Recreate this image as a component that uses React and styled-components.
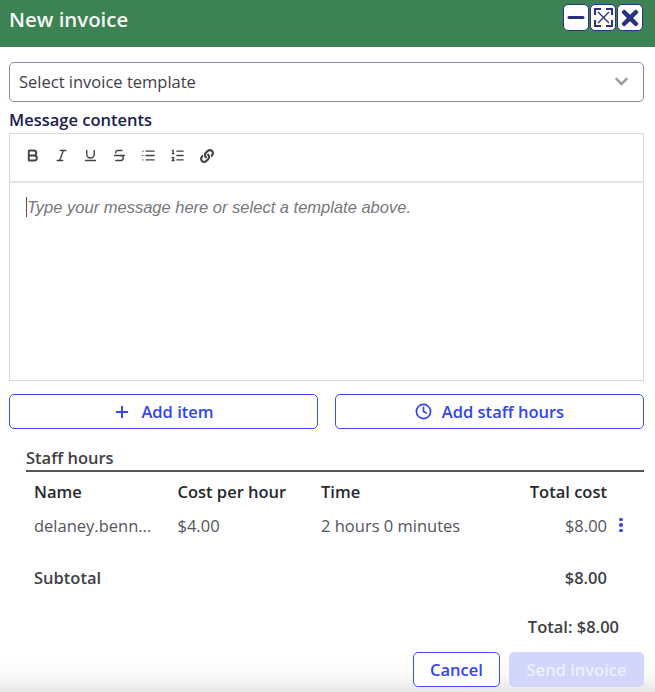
import React from 'react';
import styled, { createGlobalStyle } from 'styled-components';
import { FaLink, FaChevronDown, FaTimes } from 'react-icons/fa';
import { FiPlus, FiClock, FiMinus } from 'react-icons/fi';
import { Bold, Italic, Underline, Strikethrough, List, ListOrdered } from 'lucide-react';

const GlobalStyle = createGlobalStyle`
    html, body {
        margin: 0;
        padding: 0;
        background: #fff;
    }
    * {
        box-sizing: border-box;
    }
`;
const Dialog = styled.div`
    width: 655px;
    height: 692px;
    display: flex;
    flex-direction: column;
    overflow: hidden;
    background: #fff;
    font-family: "Open Sans", "Noto Sans", sans-serif;
    color: #3c3c48;
`;
const Header = styled.div`
    height: 47px;
    flex: none;
    display: flex;
    align-items: flex-start;
    justify-content: space-between;
    padding: 4px 12px 0 9px;
    background: #3c8253;
`;
const Title = styled.div`
    margin-top: 2px;
    font-size: 20.4px;
    line-height: 27px;
    font-weight: 600;
    color: #f4f8f5;
`;
const WindowButtons = styled.div`
    display: flex;
    gap: 1px;
`;
const WindowButton = styled.button`
    width: 26px;
    height: 27px;
    padding: 0;
    display: flex;
    align-items: center;
    justify-content: center;
    background: #fff;
    border: 1px solid #27337f;
    border-radius: 5px;
    color: #27337f;
`;
const Body = styled.div`
    flex: 1;
    display: flex;
    flex-direction: column;
    padding: 15px 11px 0 9px;
`;
const Select = styled.div`
    height: 40px;
    flex: none;
    display: flex;
    align-items: center;
    justify-content: space-between;
    padding: 0 14px 2px 9px;
    border: 1px solid #8a8aa8;
    border-radius: 5px;
    font-size: 16.5px;
    color: #3f3f47;
`;
const Label = styled.div`
    margin-top: 7px;
    font-size: 16.5px;
    line-height: 22px;
    font-weight: 600;
    color: #1b2150;
`;
const Editor = styled.div`
    height: 248px;
    margin-top: 2px;
    flex: none;
    border: 1px solid #d9d9d9;
`;
const Toolbar = styled.div`
    height: 49px;
    display: flex;
    align-items: flex-start;
    gap: 14px;
    padding: 14px 0 0 15px;
    border-bottom: 2px solid #e4e4e4;
    color: #444;
`;
const ToolIcon = styled.span`
    width: 15px;
    height: 15px;
    display: flex;
    align-items: center;
    justify-content: center;
    font-size: 14px;
`;
const Placeholder = styled.div`
    margin: 14px 0 0 16px;
    border-left: 1px solid #555;
    width: fit-content;
    font-family: "Liberation Sans", Arial, sans-serif;
    font-size: 16.5px;
    line-height: 20px;
    font-style: italic;
    color: #77777c;
`;
const ActionRow = styled.div`
    display: grid;
    grid-template-columns: 309px 309px;
    justify-content: space-between;
    margin-top: 13px;
`;
const OutlineButton = styled.button`
    height: 35px;
    width: ${props => (props.$width ? `${props.$width}px` : 'auto')};
    display: flex;
    align-items: center;
    justify-content: center;
    gap: 10px;
    padding: 0;
    background: #fff;
    border: 1px solid #3a4cf5;
    border-radius: 5px;
    font-family: inherit;
    font-size: 16.5px;
    font-weight: 600;
    color: #3344f0;
`;
const Section = styled.div`
    margin: 20px 0 0 17px;
`;
const SectionTitle = styled.div`
    height: 23px;
    font-size: 16.5px;
    line-height: 18px;
    font-weight: 600;
    color: #3f3f47;
    border-bottom: 2px solid #55555a;
`;
const Grid = styled.div`
    display: grid;
    grid-template-columns: 143.5px 143.5px 1fr 90px 37px;
    padding: 0 0 2px 8px;
    font-size: 16.5px;
    align-items: center;
    height: ${props => props.$height}px;
    margin-top: ${props => props.$top || 0}px;
`;
const HeadCell = styled.div`
    font-weight: 600;
    color: #28282e;
    white-space: nowrap;
    text-align: ${props => (props.$right ? 'right' : 'left')};
`;
const Cell = styled.div`
    color: #55555c;
    text-align: ${props => (props.$right ? 'right' : 'left')};
    white-space: nowrap;
`;
const StrongCell = styled.div`
    font-weight: 600;
    color: #3f3f47;
    text-align: ${props => (props.$right ? 'right' : 'left')};
`;
const Kebab = styled.span`
    justify-self: start;
    display: flex;
    flex-direction: column;
    gap: 2px;
    margin-left: 12px;
    span {
        width: 3.5px;
        height: 3.5px;
        border-radius: 50%;
        background: #3344f0;
    }
`;
const Total = styled.div`
    margin-top: 25px;
    padding-right: 25px;
    text-align: right;
    font-size: 16.5px;
    line-height: 22px;
    font-weight: 600;
    color: #3f3f47;
`;
const Footer = styled.div`
    height: 47px;
    flex: none;
    display: flex;
    justify-content: flex-end;
    gap: 9px;
    padding: 7px 11px 0 0;
    background: linear-gradient(to bottom, #fff 25%, #fafafa 65%, #e6e6e6 100%);
`;
const SendButton = styled.button`
    width: 135px;
    height: 35px;
    padding: 0;
    border: none;
    border-radius: 5px;
    background: #d3d6fb;
    font-family: inherit;
    font-size: 16.5px;
    font-weight: 600;
    color: #eff0fe;
`;

const ExpandIcon = () => (
    <svg width="21" height="21" viewBox="0 0 21 21" fill="none" stroke="currentColor" strokeWidth="2">
        <path d="M5 5l11 11M16 5L5 16" strokeWidth="1.4" />
        <path d="M2 8V2h6M13 2h6v6M19 13v6h-6M8 19H2v-6" />
    </svg>
);

const tools = [Bold, Italic, Underline, Strikethrough, List, ListOrdered];

const App = () => (
    <Dialog>
        <GlobalStyle />
        <Header>
            <Title>New invoice</Title>
            <WindowButtons>
                <WindowButton><FiMinus size={25} strokeWidth={3} /></WindowButton>
                <WindowButton><ExpandIcon /></WindowButton>
                <WindowButton><FaTimes size={24} /></WindowButton>
            </WindowButtons>
        </Header>
        <Body>
            <Select>
                Select invoice template
                <FaChevronDown size={15} color="#9a9a9a" />
            </Select>
            <Label>Message contents</Label>
            <Editor>
                <Toolbar>
                    {tools.map((Icon, i) => <ToolIcon key={i}><Icon size={15} strokeWidth={i === 0 ? 3 : 2.2} /></ToolIcon>)}
                    <ToolIcon><FaLink /></ToolIcon>
                </Toolbar>
                <Placeholder>Type your message here or select a template above.</Placeholder>
            </Editor>
            <ActionRow>
                <OutlineButton><FiPlus size={18} strokeWidth={2.6} /> Add item</OutlineButton>
                <OutlineButton><FiClock size={17} strokeWidth={2.4} /> Add staff hours</OutlineButton>
            </ActionRow>
            <Section>
                <SectionTitle>Staff hours</SectionTitle>
                <Grid $height={41}>
                    <HeadCell>Name</HeadCell>
                    <HeadCell>Cost per hour</HeadCell>
                    <HeadCell>Time</HeadCell>
                    <HeadCell $right>Total cost</HeadCell>
                </Grid>
                <Grid $height={26}>
                    <Cell>delaney.benn...</Cell>
                    <Cell>$4.00</Cell>
                    <Cell>2 hours 0 minutes</Cell>
                    <Cell $right>$8.00</Cell>
                    <Kebab><span /><span /><span /></Kebab>
                </Grid>
                <Grid $height={26} $top={26}>
                    <StrongCell>Subtotal</StrongCell>
                    <span />
                    <span />
                    <StrongCell $right>$8.00</StrongCell>
                </Grid>
                <Total>Total: $8.00</Total>
            </Section>
        </Body>
        <Footer>
            <OutlineButton $width={87}>Cancel</OutlineButton>
            <SendButton>Send invoice</SendButton>
        </Footer>
    </Dialog>
);

export default App;
